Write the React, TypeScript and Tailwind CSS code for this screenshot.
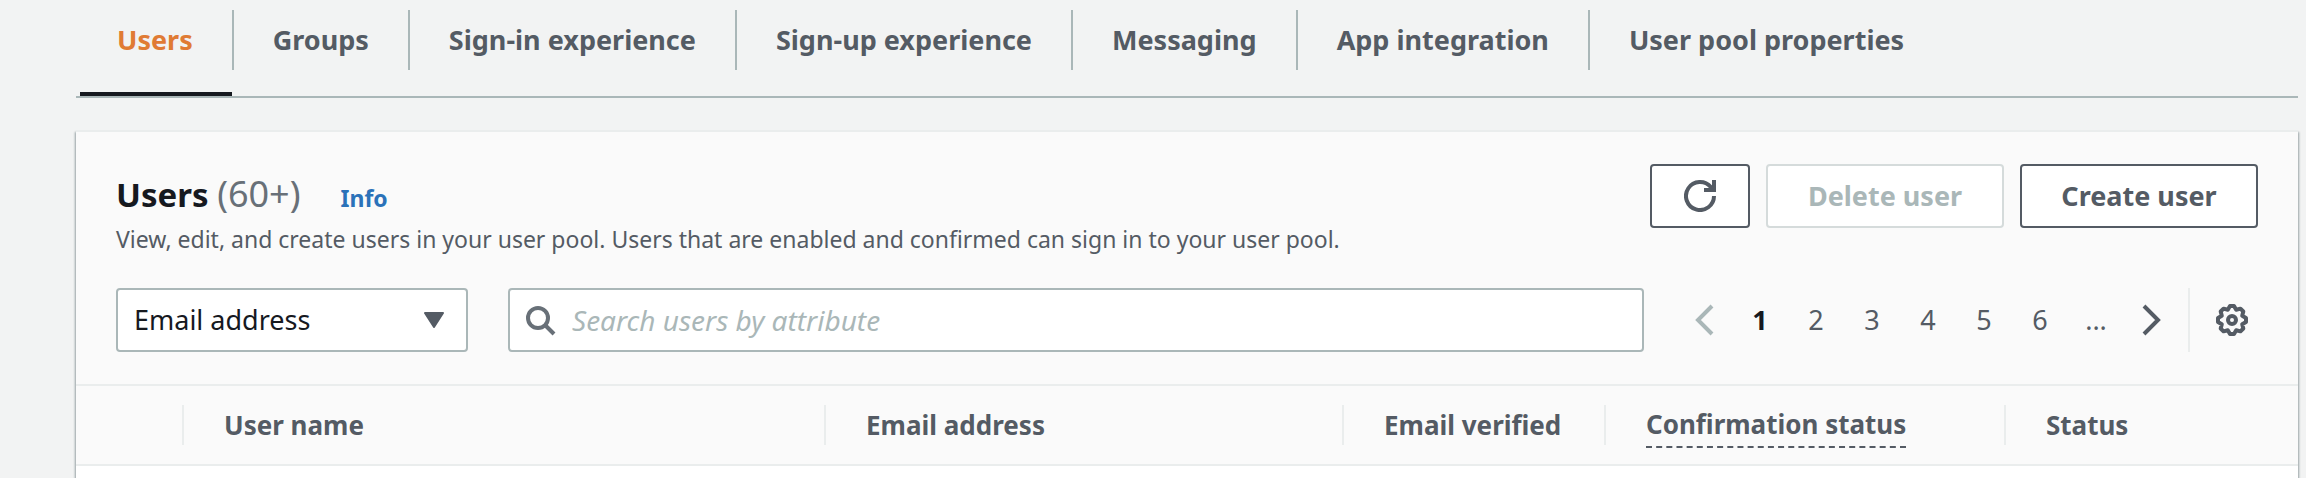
import { useState } from 'react';

const tabs = [
  'Users',
  'Groups',
  'Sign-in experience',
  'Sign-up experience',
  'Messaging',
  'App integration',
  'User pool properties',
];

const columns = [
  { label: 'User name', width: 'w-[642px]', dashed: false },
  { label: 'Email address', width: 'w-[518px]', dashed: false },
  { label: 'Email verified', width: 'w-[262px]', dashed: false },
  { label: 'Confirmation status', width: 'w-[400px]', dashed: true },
  { label: 'Status', width: '', dashed: false },
];

const pages = ['1', '2', '3', '4', '5', '6'];

function RefreshIcon() {
  return (
    <svg viewBox="0 0 16 16" className="size-8" fill="none" stroke="currentColor" strokeWidth="2" aria-hidden="true">
      <path d="M15 8a7 7 0 1 1-1.6-4.45L15 5" />
      <path d="M15 0v5h-5" />
    </svg>
  );
}

function SearchIcon() {
  return (
    <svg viewBox="0 0 16 16" className="size-8" fill="none" stroke="currentColor" strokeWidth="2" aria-hidden="true">
      <circle cx="7" cy="7" r="5" />
      <path d="m15 15-4.5-4.5" />
    </svg>
  );
}

function Chevron({ flipped = false }: { flipped?: boolean }) {
  return (
    <svg viewBox="0 0 16 16" className="size-8" fill="none" stroke="currentColor" strokeWidth="2" aria-hidden="true">
      <path d={flipped ? 'M12 1 5 8l7 7' : 'm4 1 7 7-7 7'} />
    </svg>
  );
}

function GearIcon() {
  return (
    <svg viewBox="0 0 16 16" className="size-8" fill="none" stroke="currentColor" strokeWidth="2" strokeLinejoin="round" aria-hidden="true">
      <path d="M7 1 9 1 10.1 2.9 12.24 2.34 13.66 3.76 13.1 5.9 15 7 15 9 13.1 10.1 13.66 12.24 12.24 13.66 10.1 13.1 9 15 7 15 5.9 13.1 3.76 13.66 2.34 12.24 2.9 10.1 1 9 1 7 2.9 5.9 2.34 3.76 3.76 2.34 5.9 2.9z" />
      <circle cx="8" cy="8" r="2" />
    </svg>
  );
}

export default function App() {
  const [active, setActive] = useState('Users');
  const [page, setPage] = useState('1');

  return (
    <div className="flex min-h-screen flex-col bg-[#f2f3f3] pl-[76px] pr-2 font-['Noto_Sans',sans-serif] text-[27px] leading-9 text-[#545b64]">
      <div role="tablist" className="flex border-b-2 border-[#aab7b8] pt-[10px] pl-[2px]">
        {tabs.map((tab) => (
          <button
            key={tab}
            type="button"
            role="tab"
            aria-selected={active === tab}
            onClick={() => setActive(tab)}
            className="group flex flex-col gap-[22px] font-bold aria-selected:text-[#e07b34]"
          >
            <span className="flex h-[60px] w-full items-center border-r-2 border-[#aab7b8] px-[39px] whitespace-nowrap group-last:border-transparent">
              {tab}
            </span>
            <span className="mx-[2px] h-1 self-stretch group-aria-selected:bg-[#16191f]" />
          </button>
        ))}
      </div>

      <main className="mt-8 grow border-t-2 border-[#eaeded] bg-white shadow-[1px_2px_2px_0_#9aa5a8,-1px_2px_2px_0_#9aa5a8]">
        <div className="bg-[#fafafa]">
          <header className="flex items-start justify-between gap-8 px-10 pt-8">
            <div>
              <div className="flex items-baseline gap-10 pt-[6px]">
                <h1 className="text-[33px] leading-[48px] font-bold text-[#16191f]">
                  Users <span className="text-[36px] font-normal text-[#687078]">(60+)</span>
                </h1>
                <a href="#info" className="text-[23px] font-bold text-[#2b72b9]">Info</a>
              </div>
              <p className="text-[23px] leading-10">
                View, edit, and create users in your user pool. Users that are enabled and confirmed can sign in to your user pool.
              </p>
            </div>
            <div className="flex shrink-0 gap-4 font-bold">
              <button type="button" aria-label="Refresh" className="flex h-16 w-[100px] items-center justify-center rounded-sm border-2 border-[#545b64] bg-white">
                <RefreshIcon />
              </button>
              <button type="button" disabled className="h-16 w-[238px] rounded-sm border-2 border-[#d5dbdb] bg-white text-[#aab7b8]">
                Delete user
              </button>
              <button type="button" className="h-16 w-[238px] rounded-sm border-2 border-[#545b64] bg-white">
                Create user
              </button>
            </div>
          </header>

          <div className="flex items-center pt-[29px] pr-[50px] pb-8 pl-10">
            <div className="relative w-[352px] shrink-0 text-[#16191f]">
              <select aria-label="Search attribute" className="block h-16 w-full appearance-none rounded-sm border-2 border-[#aab7b8] bg-white px-4">
                <option>Email address</option>
              </select>
              <svg viewBox="0 0 20 16" className="pointer-events-none absolute top-6 right-6 h-4 w-5 text-[#545b64]" fill="currentColor" stroke="currentColor" strokeWidth="2" strokeLinejoin="round" aria-hidden="true">
                <path d="M1 1h18l-9 14z" />
              </svg>
            </div>
            <label className="ml-10 flex h-16 min-w-0 grow items-center gap-4 rounded-sm border-2 border-[#aab7b8] bg-white px-[14px]">
              <span className="text-[#687078]">
                <SearchIcon />
              </span>
              <input
                type="search"
                aria-label="Search users by attribute"
                placeholder="Search users by attribute"
                className="min-w-0 grow text-[28px] text-[#16191f] outline-none placeholder:text-[#aab7b8] placeholder:italic"
              />
            </label>
            <nav aria-label="Pagination" className="ml-11 flex shrink-0 items-center">
              <button type="button" disabled aria-label="Previous page" className="text-[#aab7b8]">
                <Chevron flipped />
              </button>
              <span className="ml-3 flex">
                {pages.map((n) => (
                  <button
                    key={n}
                    type="button"
                    aria-current={page === n ? 'page' : undefined}
                    onClick={() => setPage(n)}
                    className="w-14 aria-[current=page]:font-bold aria-[current=page]:text-[#16191f]"
                  >
                    {n}
                  </button>
                ))}
                <span className="w-14 text-center">...</span>
              </span>
              <button type="button" aria-label="Next page" className="ml-3">
                <Chevron />
              </button>
            </nav>
            <div className="ml-5 flex h-16 shrink-0 items-center border-l-2 border-[#eaeded] pl-[26px]">
              <button type="button" aria-label="Preferences">
                <GearIcon />
              </button>
            </div>
          </div>

          <table className="w-full table-fixed border-y-2 border-[#eaeded] text-left">
            <thead>
              <tr className="h-20">
                <th className="w-[106px] p-0" aria-label="Selection" />
                {columns.map(({ label, width, dashed }) => (
                  <th key={label} scope="col" className={`${width} p-0 font-bold whitespace-nowrap`}>
                    <div className="flex h-10 items-center border-l-2 border-[#eaeded] pl-10">
                      <span className={dashed ? 'mt-1 border-b-2 border-dashed border-[#545b64] pb-1 text-[26px]' : 'text-[26px]'}>{label}</span>
                    </div>
                  </th>
                ))}
              </tr>
            </thead>
          </table>
        </div>
      </main>
    </div>
  );
}
